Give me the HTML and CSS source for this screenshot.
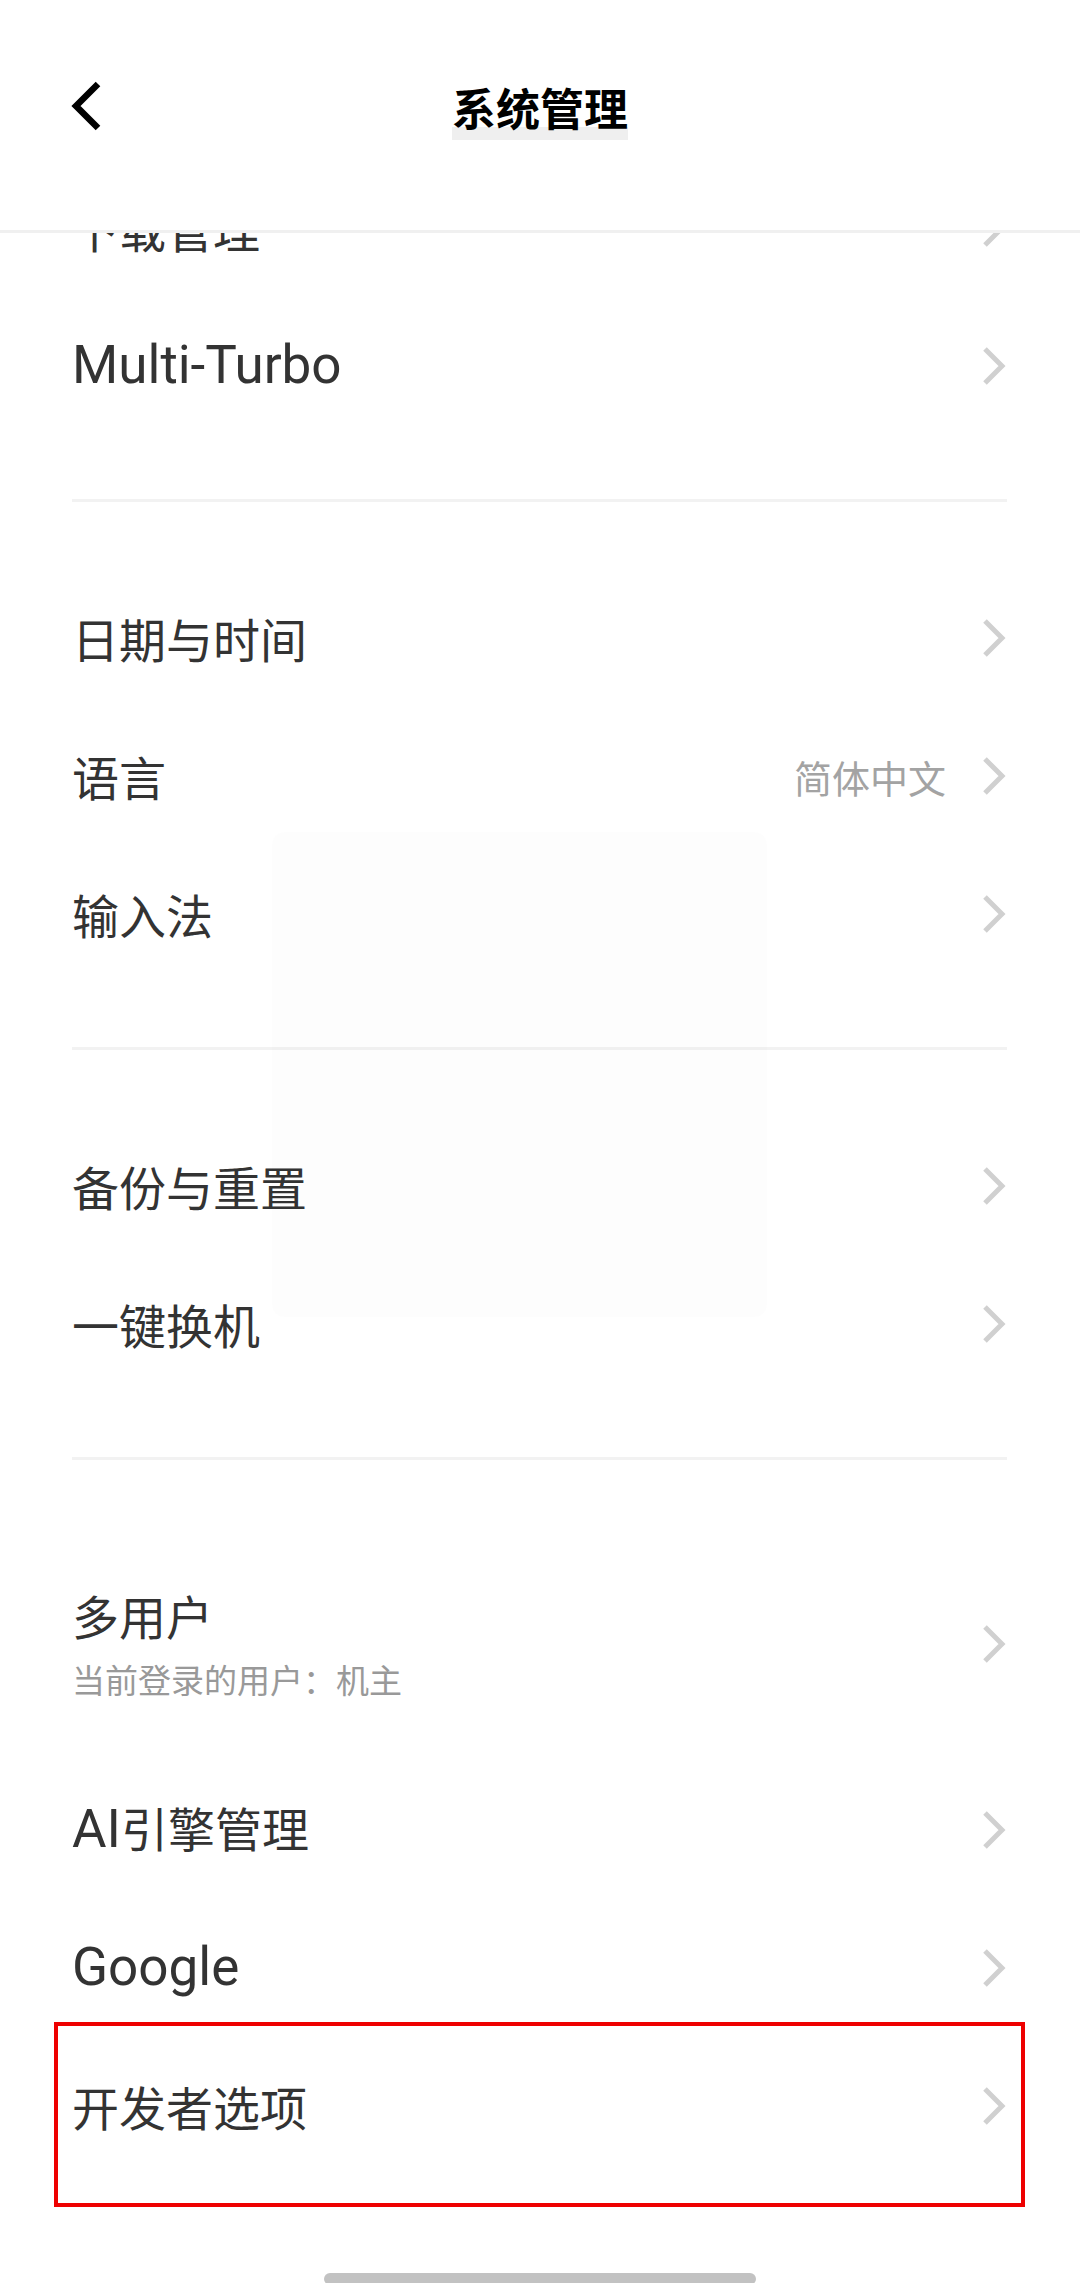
FILE: index.html
```html
<!DOCTYPE html>
<html lang="zh">
<head>
    <meta charset="UTF-8">
    <meta name="viewport" content="width=device-width, initial-scale=1.0">
    <title>系统管理</title>
    <link rel="stylesheet" href="styles.css">
</head>
<body>
    <div class="app-header">
        <div class="header-bar">
            <svg class="back-icon" width="36" height="52" viewBox="0 0 36 52">
                <path d="M30 4 L8 26 L30 48" fill="none" stroke="#000" stroke-width="6.5" stroke-linejoin="miter"/>
            </svg>
            <span class="header-title">系统管理</span>
        </div>
    </div>

    <div class="settings-list">
        <div class="group">
            <div class="row"><span class="label">下载管理</span><span class="chevron"></span></div>
            <div class="row"><span class="label"><span class="latin">Multi-Turbo</span></span><span class="chevron"></span></div>
        </div>
        <div class="separator"><div class="line"></div></div>
        <div class="group">
            <div class="row"><span class="label">日期与时间</span><span class="chevron"></span></div>
            <div class="row"><span class="label">语言</span><span class="value">简体中文</span><span class="chevron"></span></div>
            <div class="row"><span class="label">输入法</span><span class="chevron"></span></div>
        </div>
        <div class="separator"><div class="line"></div></div>
        <div class="group">
            <div class="row"><span class="label">备份与重置</span><span class="chevron"></span></div>
            <div class="row"><span class="label">一键换机</span><span class="chevron"></span></div>
        </div>
        <div class="separator"><div class="line"></div></div>
        <div class="group">
            <div class="row row-tall">
                <div class="label-stack">
                    <span class="label">多用户</span>
                    <span class="sub">当前登录的用户：机主</span>
                </div>
                <span class="chevron"></span>
            </div>
            <div class="row"><span class="label"><span class="latin">AI</span>引擎管理</span><span class="chevron"></span></div>
            <div class="row"><span class="label"><span class="latin">Google</span></span><span class="chevron"></span></div>
            <div class="row marked"><span class="label">开发者选项</span><span class="chevron"></span></div>
        </div>
    </div>

    <!-- 淡出中的提示框 -->
    <div class="ghost-toast"></div>

    <div class="home-bar"></div>

    <script>
        // 箭头图标
        document.querySelectorAll('.chevron').forEach(function(el) {
            el.innerHTML = '<svg width="26" height="40" viewBox="0 0 26 40"><path d="M4 3 L21 20 L4 37" fill="none" stroke="#d0d0d0" stroke-width="5"/></svg>';
        });
    </script>
</body>
</html>
```

FILE: styles.css
```css
html, body {
    margin: 0;
    padding: 0;
}
body {
    width: 1080px;
    height: 2283px;
    overflow: hidden;
    background: #fff;
    font-family: Roboto, "Noto Sans CJK SC", sans-serif;
    color: #333;
    position: relative;
}
.app-header {
    position: fixed;
    top: 0;
    left: 0;
    right: 0;
    height: 230px;
    background: #fff;
    border-bottom: 3px solid #f0f0f0;
    z-index: 10;
}
.header-bar {
    position: relative;
    margin-top: 60px;
    height: 92px;
    display: flex;
    align-items: center;
    justify-content: center;
}
.back-icon {
    position: absolute;
    left: 68px;
    top: 20px;
}
.header-title {
    display: inline-block;
    font-family: "Noto Sans CJK SC", sans-serif;
    font-size: 44px;
    font-weight: bold;
    color: #000;
    line-height: 50px;
    height: 58px;
    margin-top: 10px;
    background: linear-gradient(to bottom, transparent 45px, #efefef 45px);
}
.settings-list {
    padding: 159px 73px 0 72px;
}
.row {
    height: 138px;
    display: flex;
    align-items: center;
    position: relative;
}
.row-tall {
    height: 234px;
}
.label {
    flex: 1;
    font-family: "Noto Sans CJK SC", sans-serif;
    font-size: 47px;
    color: #333;
    line-height: 1.2;
}
.latin {
    font-family: Roboto, sans-serif;
    font-size: 53px;
}
.label-stack {
    flex: 1;
    display: flex;
    flex-direction: column;
    margin-top: 2px;
}
.sub {
    font-family: "Noto Sans CJK SC", sans-serif;
    font-size: 33px;
    color: #999;
    margin-top: 12px;
}
.value {
    font-family: "Noto Sans CJK SC", sans-serif;
    font-size: 38px;
    color: #a3a3a3;
    margin-right: 35px;
}
.chevron {
    width: 26px;
    height: 40px;
    display: flex;
}
.separator {
    padding: 64px 0 67px;
}
.line {
    height: 3px;
    background: #f2f2f2;
}
.marked::after {
    content: "";
    position: absolute;
    top: -15px;
    bottom: -32px;
    left: -18px;
    right: -18px;
    border: 4px solid #ee0000;
}
.ghost-toast {
    position: absolute;
    left: 272px;
    top: 832px;
    width: 495px;
    height: 485px;
    border-radius: 12px;
    background: rgba(0, 0, 0, 0.007);
}
.home-bar {
    position: fixed;
    left: 324px;
    width: 432px;
    height: 12px;
    bottom: -2px;
    border-radius: 6px;
    background: #c2c2c2;
}
```
